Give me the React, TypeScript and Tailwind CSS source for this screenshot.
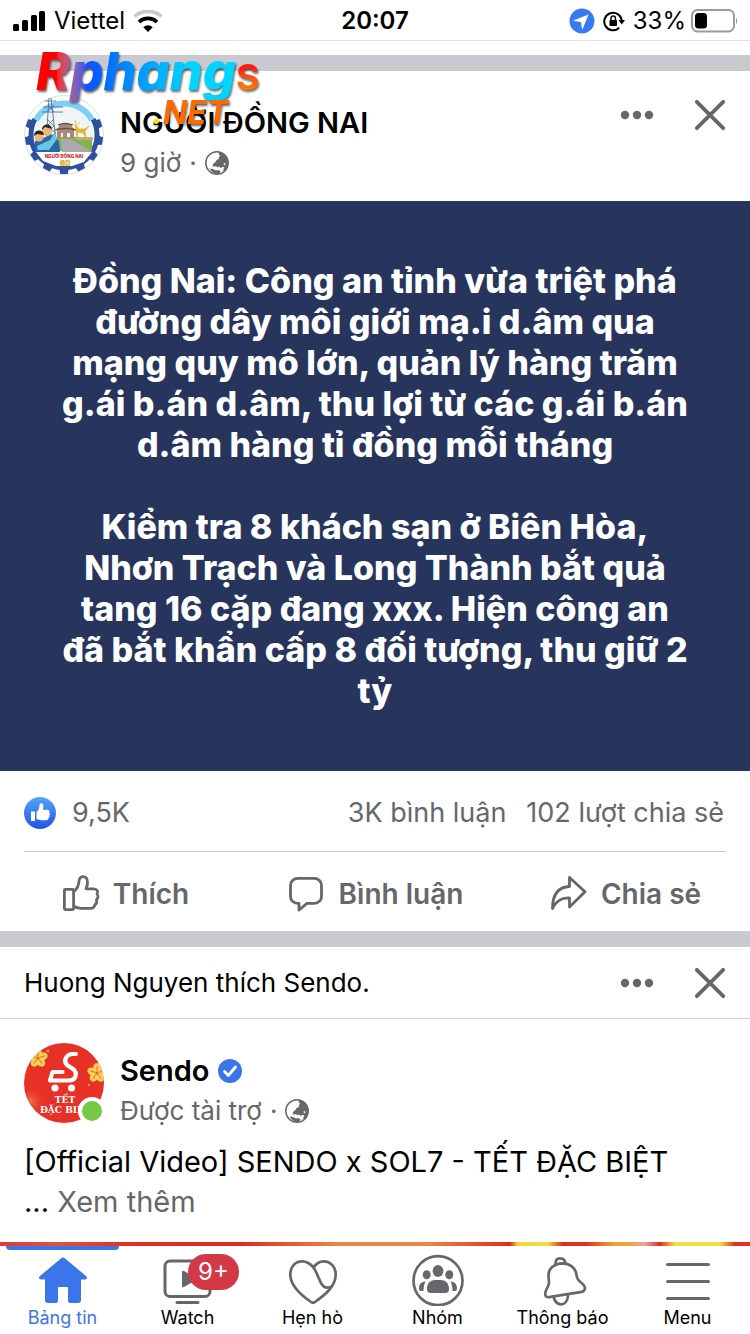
import type { ReactNode } from 'react';

function SignalIcon() {
  return (
    <svg width="34" height="22" viewBox="0 0 34 22" aria-hidden="true">
      <rect x="1" y="14" width="6" height="7" rx="1.5" />
      <rect x="10" y="10" width="6" height="11" rx="1.5" />
      <rect x="19" y="5" width="6" height="16" rx="1.5" />
      <rect x="27" y="1" width="6" height="20" rx="1.5" />
    </svg>
  );
}

function WifiIcon() {
  return (
    <svg width="30" height="22" viewBox="0 0 30 22" fill="none" aria-hidden="true">
      <path d="M1.500 6.500a20.500 20.500 0 0 1 27 0" stroke="#c9c9c9" strokeWidth="3.800" />
      <path d="M6 12a13 13 0 0 1 18 0" stroke="#000" strokeWidth="3.800" />
      <path d="M10.300 17.200a6.600 6.600 0 0 1 9.400 0L15 22Z" fill="#000" />
    </svg>
  );
}

function GlobeIcon() {
  return (
    <svg width="24" height="24" viewBox="0 0 24 24" aria-hidden="true">
      <circle cx="12" cy="12" r="11.200" fill="#fff" stroke="#65676b" strokeWidth="1.500" />
      <path
        fill="#65676b"
        d="M13 .8C19.500 1.500 24 7 23.200 12.500c-.2 3.500-1.700 6-3.700 8-.8-.6-1.500-1-1.200-2l1-2.200-1.800-.4-2 1.200-1.500-1.500-2 .8-.8-1.300-2.200.6-1.500-1.200 1.200-2.200 2-1.500 1-2 2-.6.200-2.200 1.500-1.600-1.800-.6.500-1.600ZM4.500 17.500l3.500.6 3 1.400 2.500-.6 2.200 1.600-1.500 2.300c-4 .8-7.500-1.300-9.700-5.300Z"
      />
      <path fill="#fff" d="m18.300 12.700 1.700-.7.600 1.200-1.300 1Z" />
    </svg>
  );
}

function DotsIcon() {
  return (
    <svg width="34" height="10" viewBox="0 0 34 10" fill="#65676b" aria-hidden="true">
      <circle cx="5" cy="5" r="4.200" />
      <circle cx="17" cy="5" r="4.200" />
      <circle cx="29" cy="5" r="4.200" />
    </svg>
  );
}

function CloseIcon() {
  return (
    <svg width="32" height="32" viewBox="0 0 32 32" stroke="#65676b" strokeWidth="3.800" strokeLinecap="round" aria-hidden="true">
      <path d="m2.800 2.800 26.400 26.400M29.200 2.800 2.800 29.200" />
    </svg>
  );
}

function HeaderActions() {
  return (
    <div className="flex items-center gap-10">
      <button type="button" aria-label="Tùy chọn khác" className="flex h-8 items-center">
        <DotsIcon />
      </button>
      <button type="button" aria-label="Ẩn bài viết">
        <CloseIcon />
      </button>
    </div>
  );
}

function NguoiDongNaiAvatar() {
  const teeth = Array.from({ length: 9 }, (_, i) => 72 + i * 27);
  return (
    <svg className="size-20 shrink-0" viewBox="0 0 80 80" aria-hidden="true">
      <circle cx="40" cy="40" r="39.500" fill="#fff" stroke="#dcdde0" />
      <g fill="#2f4f9f">
        {teeth.map((a) => (
          <path key={a} d="m35 8 1.200-7h7.600L45 8Z" transform={`rotate(${a} 40 40)`} />
        ))}
      </g>
      <path d="M11 24a33 33 0 1 0 58 0" fill="none" stroke="#2f4f9f" strokeWidth="5" />
      <circle cx="40" cy="40" r="30" fill="#eef5f4" />
      <path d="M14 42h54v14H14Z" fill="#83b34e" />
      <path d="M37 44h10l21 13H38Z" fill="#aaa9b0" />
      <path d="M33 43v-8h-2l4-3v-3h13v3l4 3h-2v8h-4v-5h-3v5h-4v-5h-2v5Z" fill="#a98a78" />
      <path d="M34 30q7-3 15 0M31 35q10-3 21 0" stroke="#6b4e43" strokeWidth="1.300" fill="none" />
      <path d="m51 29 4 5h6l4-3-4 5 1 7-3-5-5-1-1 6-1-9Z M52 29l-1-4m2 5 3-3" fill="#e3b934" stroke="#e3b934" strokeWidth=".800" />
      <path d="M52 42h17v3H52Z" fill="#c7a77d" />
      <path d="M12 25a32 32 0 0 1 56 0" fill="none" stroke="#7fd0f2" strokeWidth="6" />
      <path d="M25 3 22 48M27 3l5 43M19 12h20M18 17h21M21 6h11M23 24l7 7-8 7 9 7M30 24l-7 7 9 7-10 7M24 10l6 7m0-7-7 7" stroke="#4f6ea5" strokeWidth=".900" fill="none" />
      <path d="M11 57V46l8-2 8-5 8 7 1 11Z" fill="#2965a8" />
      <circle cx="15" cy="42" r="4.500" fill="#efb579" />
      <circle cx="23" cy="36" r="5" fill="#efb579" />
      <path d="M10 41a5 5 0 0 1 10-1l-7-1ZM18 35a5 5 0 0 1 10-1l-7-2Z" fill="#29241f" />
      <path d="m13 51 13-6 5-8 2 7-8 11H14Z" fill="#66c8e4" />
      <path d="M12 57h56l-8 10-12 4H32l-13-5Z" fill="#fff" />
      <text x="40" y="63" textAnchor="middle" fontFamily="Inter, sans-serif" fontSize="4.500" fontWeight="800" fill="#c91f2c">NGƯỜI ĐỒNG NAI</text>
      <text x="41" y="71" textAnchor="middle" fontFamily="Inter, sans-serif" fontSize="8" fontWeight="700" fill="#fff36b" stroke="#c29d25" strokeWidth=".500">60</text>
    </svg>
  );
}

function Blossom({ x, y }: { x: number; y: number }) {
  return (
    <g transform={`translate(${x} ${y})`} fill="#f9cf55">
      {[0, 72, 144, 216, 288].map((a) => (
        <g key={a} transform={`rotate(${a})`}>
          <ellipse cy="-5.500" rx="3.800" ry="4.500" />
          <path d="M0-2v-5" stroke="#e8672b" strokeWidth=".900" />
        </g>
      ))}
      <circle r="1.600" fill="#e8672b" />
    </g>
  );
}

function SendoAvatar() {
  return (
    <div className="relative size-20 shrink-0">
      <svg className="size-20 rounded-full" viewBox="0 0 80 80" aria-hidden="true">
        <defs>
          <radialGradient id="glow">
            <stop stopColor="#f98a4b" stopOpacity=".7" />
            <stop offset="1" stopColor="#e73127" stopOpacity="0" />
          </radialGradient>
        </defs>
        <rect width="80" height="80" fill="#e73127" />
        <circle cx="7" cy="58" r="15" fill="url(#glow)" />
        <Blossom x={14} y={15} />
        <Blossom x={73} y={30} />
        <circle cx="24" cy="8" r="1.200" fill="#f7c23f" />
        <circle cx="65" cy="42" r="1" fill="#f7c23f" />
        <path d="M52 11h-3c-7 0-10 7-6 11l6 4c5 4 3 11.500-4 11.500H26l2.500-8.500h10" fill="none" stroke="#fff" strokeWidth="4.200" strokeLinecap="round" strokeLinejoin="round" />
        <circle cx="31" cy="45" r="3.600" fill="#fff" />
        <circle cx="47.500" cy="45" r="3.600" fill="#fff" />
        <g fontFamily="'DejaVu Serif', serif" fontWeight="700" fill="#fff">
          <text x="41" y="60" fontSize="9" textAnchor="middle">TẾT</text>
          <text x="16" y="70" fontSize="9">ĐẶC BIỆT</text>
        </g>
      </svg>
      <span className="absolute -right-0.5 -bottom-0.5 size-7 rounded-full border-4 border-white bg-[#73c944]" />
    </div>
  );
}

const NAV: { label: string; icon: ReactNode; active?: boolean; badge?: string }[] = [
  {
    label: 'Bảng tin',
    active: true,
    icon: (
      <path d="M26.500 4q1.500-1.200 3 0L51 22c2 1.800.8 3.500-1 3.500h-4V46q0 3-3 3h-7.500q-2.500 0-2.500-2.500V34q0-1-1-1h-8q-1 0-1 1v12.500q0 2.500-2.500 2.500H13q-3 0-3-3V25.500H6c-1.800 0-3-1.700-1-3.500Z" fill="#3b76e8" />
    ),
  },
  {
    label: 'Watch',
    badge: '9+',
    icon: (
      <>
        <rect x="5" y="7" width="45" height="35.500" rx="5" fill="none" stroke="#65676b" strokeWidth="3" />
        <path d="M17 48.500h21" stroke="#65676b" strokeWidth="3" strokeLinecap="round" />
        <path d="M22 18q0-2 2-1l12 7q1.500 1 0 2l-12 7q-2 1-2-1Z" fill="#65676b" />
      </>
    ),
  },
  {
    label: 'Hẹn hò',
    icon: (
      <g fill="none" stroke="#65676b" strokeWidth="2.700" strokeLinejoin="round" strokeLinecap="round">
        <path d="M28.500 13.500C25 9 21 7.300 17 7.300 10 7.300 5.300 13 5.300 20.500c0 12 12 21.500 20.700 27.500q2 1.500 4 0C39 41.500 50.700 33 50.700 20.500c0-7.500-5-13.200-12-13.200-4 0-7.500 2-10.200 6.200" />
        <path d="M28.500 13.500c3.500 5 5 11 7.500 15.500 2 3.700 5 5.800 9.500 4" />
      </g>
    ),
  },
  {
    label: 'Nhóm',
    icon: (
      <g fill="#65676b">
        <circle cx="28" cy="26.700" r="24.500" fill="none" stroke="#65676b" strokeWidth="2.700" />
        <ellipse cx="28" cy="17" rx="5.400" ry="6" />
        <ellipse cx="16.700" cy="20.800" rx="4" ry="4.500" />
        <ellipse cx="39.300" cy="20.800" rx="4" ry="4.500" />
        <path d="M17 35c0-5.500 3-9 8-9h6c5 0 8 3.500 8 9 0 3-1.500 4-4 4H21c-2.500 0-4-1-4-4ZM15.500 27.500c-5 .2-6.500 3.500-6.500 7 0 2 1 2.500 2.500 2.500h2c0-4 .5-6.500 2-9.500ZM40.500 27.500c5 .2 6.500 3.500 6.500 7 0 2-1 2.500-2.500 2.500h-2c0-4-.5-6.500-2-9.500Z" />
      </g>
    ),
  },
  {
    label: 'Thông báo',
    icon: (
      <g fill="none" stroke="#65676b" strokeWidth="2.700" strokeLinejoin="round" strokeLinecap="round">
        <path d="M20.500 10.500C20 6.500 22 4.300 25 4.300c3.200 0 5.300 2 5.500 5.700" />
        <path d="M13.500 22C13 15 19 9.500 27.500 9.300 36 9.500 41 15 41.500 21c.3 3.500 1.800 5.500 4.500 7.500 3 2.300 4.500 4 3.800 6.500-.4 1.800-1.300 2.500-3 2.800L14 43.200c-2.500.3-3.800-1-3.800-3.200 0-5 3.800-7 3.800-11.500Z" />
        <path d="M18.500 43c1.500 5 4 7.400 7.500 7.400s6.500-3 7-8.400" />
      </g>
    ),
  },
  {
    label: 'Menu',
    icon: <path d="M7.500 10.500h41M7.500 27.500h41M7.500 44.500h41" stroke="#65676b" strokeWidth="3" strokeLinecap="round" />,
  },
];

export default function App() {
  return (
    <div className="flex min-h-screen flex-col bg-white font-['Inter',sans-serif] text-black">
      <header className="relative grid h-[41px] grid-cols-3 items-center border-b border-[#dedfe1] px-3 pt-0.5 text-2xl leading-8">
        <div className="flex items-center gap-2">
          <SignalIcon />
          <span>Viettel</span>
          <WifiIcon />
        </div>
        <time className="text-center font-semibold">20:07</time>
        <div className="flex items-center justify-end gap-2">
          <svg width="26" height="26" viewBox="0 0 26 26" aria-hidden="true">
            <circle cx="13" cy="13" r="12.500" fill="#367bf5" />
            <path d="M19.500 6.500 5 12.200q-1 .6.200.9l6.800.9.900 6.500q.3 1.200.9.200Z" fill="#fff" />
          </svg>
          <svg width="22" height="22" viewBox="0 0 22 22" fill="none" stroke="#000" aria-hidden="true">
            <path d="M16.200 17.800A8.800 8.800 0 1 1 18.800 10.500" strokeWidth="2" />
            <path d="M15.500 10h6.500l-3.200 4.500Z" fill="#000" stroke="none" />
            <rect x="6.500" y="10" width="7.500" height="6" rx="1" fill="#000" stroke="none" />
            <path d="M8 10V8.200a2.200 2.200 0 0 1 4.400 0V10" strokeWidth="1.500" />
          </svg>
          <span>33%</span>
          <svg className="-ml-1" width="48" height="24" viewBox="0 0 48 24" aria-hidden="true">
            <rect x="2" y="1" width="42" height="21.500" rx="5.500" fill="none" stroke="#9b9b9b" strokeWidth="2" />
            <rect x="5" y="4" width="12" height="15.500" rx="3.500" />
            <path d="M46 8.500q2.500 3.500 0 7Z" fill="#9b9b9b" />
          </svg>
        </div>
        <div className="pointer-events-none absolute top-10 left-9 z-10 italic drop-shadow-[1px_2px_1px_rgba(0,0,0,0.6)]">
          <div className="flex items-baseline text-[52px] leading-[64px] font-extrabold">
            <span className="bg-linear-to-r from-[#ff0000] from-10% via-[#144dff] via-25% to-[#00d4ff] to-75% bg-clip-text pr-1 text-transparent">Rphang</span>
            <span className="-ml-1 bg-linear-to-b from-[#ff1a10] from-30% to-[#ff7a00] to-80% bg-clip-text pr-1 text-4xl font-bold text-transparent not-italic">S</span>
          </div>
          <div className="-mt-3 pl-[116px] text-[32px] leading-[42px] font-bold text-[#ff6a00]">
            <span className="text-[#ffe600]">.</span>NET
          </div>
        </div>
      </header>

      <main className="flex-1">
        <article className="mt-3.5 border-t-[16px] border-[#c9cad0]">
          <div className="flex h-[130px] items-start px-6 pt-6">
            <NguoiDongNaiAvatar />
            <div className="ml-4 flex-1 pt-2.5">
              <h2 className="text-[29px] leading-9 font-semibold">NGƯỜI ĐỒNG NAI</h2>
              <p className="mt-1 flex items-center gap-2 text-[26px] leading-9 text-[#65676b]">
                9 giờ <span>·</span> <GlobeIcon />
              </p>
            </div>
            <div className="pt-1"><HeaderActions /></div>
          </div>

          <div className="bg-[#27355d] px-14 pt-[59px] pb-[60px] text-center text-[34px] leading-[41px] font-extrabold text-white">
            <p>
              Đồng Nai: Công an tỉnh vừa triệt phá<br />
              đường dây môi giới mạ.i d.âm qua<br />
              mạng quy mô lớn, quản lý hàng trăm<br />
              g.ái b.án d.âm, thu lợi từ các g.ái b.án<br />
              d.âm hàng tỉ đồng mỗi tháng
            </p>
            <p className="mt-[41px]">
              Kiểm tra 8 khách sạn ở Biên Hòa,<br />
              Nhơn Trạch và Long Thành bắt quả<br />
              tang 16 cặp đang xxx. Hiện công an<br />
              đã bắt khẩn cấp 8 đối tượng, thu giữ 2<br />
              tỷ
            </p>
          </div>

          <div className="mx-6 flex h-[81px] items-center border-b border-[#c9cacc] pt-1 pr-0.5 text-[27px] leading-9 text-[#65676b]">
            <svg width="32" height="32" viewBox="0 0 32 32" aria-hidden="true">
              <defs>
                <linearGradient id="like" x1="0" y1="0" x2="0" y2="1">
                  <stop stopColor="#55a5f8" />
                  <stop offset="1" stopColor="#2552e8" />
                </linearGradient>
              </defs>
              <circle cx="16" cy="16" r="16" fill="url(#like)" />
              <path fill="#fff" d="M7 14.500h4V24H7ZM12.500 15c2-1.500 2.700-3 2.900-6.500.1-1.800 1.200-2.500 2.200-2.300 2 .5 2.300 3.500 1.200 6.500h4.400c2 0 2.600 1.500 2 2.700 1 1 .8 2.200.2 2.900.3 1 .1 2-.8 2.500 0 1.700-1 2.400-2.600 2.400h-4.500c-2 0-3.500-.4-5-1.400Z" />
            </svg>
            <span className="ml-4 flex-1">9,5K</span>
            <span>3K bình luận</span>
            <span className="ml-5">102 lượt chia sẻ</span>
          </div>

          <div className="grid h-[79px] grid-cols-3 pt-1 text-[28px] leading-9 font-semibold text-[#65676b]">
            <button type="button" className="flex items-center justify-center gap-3">
              <svg width="40" height="40" viewBox="0 0 40 40" fill="none" stroke="#65676b" strokeWidth="2.800" strokeLinejoin="round" aria-hidden="true">
                <rect x="3.400" y="15.400" width="9.200" height="20.200" rx="1" />
                <path d="M12.600 18c3.400-3 5.200-6 5.400-11 .3-6 8.500-6 8.500 1.500 0 2.500-.8 4.500-1.500 6.300h7.500c4 0 5 3.200 3.500 5.200 1.500 2 1 4.500-.5 5.700.8 2.300 0 4-1.700 5.200-.3 2.500-1.800 3.500-4.300 3.500H20c-3.500 0-5.500-1-7.400-2.400" />
              </svg>
              Thích
            </button>
            <button type="button" className="flex items-center justify-center gap-3">
              <svg width="40" height="40" viewBox="0 0 40 40" fill="none" stroke="#65676b" strokeWidth="2.800" strokeLinejoin="round" aria-hidden="true">
                <path d="M10.500 4.400h17a7 7 0 0 1 7 7v11a7 7 0 0 1-7 7h-7.500L12 36v-6.600h-1.500a7 7 0 0 1-7-7v-11a7 7 0 0 1 7-7Z" />
              </svg>
              Bình luận
            </button>
            <button type="button" className="flex items-center justify-center gap-3">
              <svg width="40" height="40" viewBox="0 0 40 40" fill="none" stroke="#65676b" strokeWidth="2.800" strokeLinejoin="round" aria-hidden="true">
                <path d="M20.500 3.500 36 17.800 20.500 33v-9C12 23.500 7 27 3.500 34.500 3.500 21 9 13 20.500 12.500Z" />
              </svg>
              Chia sẻ
            </button>
          </div>
        </article>

        <article className="border-t-[16px] border-[#c9cad0]">
          <div className="flex h-[72px] items-center justify-between border-b border-[#d0d1d4] px-6 text-[26px] leading-9">
            <p>Huong Nguyen thích Sendo.</p>
            <HeaderActions />
          </div>
          <div className="flex px-6 pt-6">
            <SendoAvatar />
            <div className="ml-4">
              <h2 className="mt-2.5 flex items-center gap-2 text-[29px] leading-9 font-semibold">
                Sendo
                <svg width="24" height="24" viewBox="0 0 24 24" aria-label="Đã xác minh">
                  <circle cx="12" cy="12" r="12" fill="#3b76e8" />
                  <path d="m6.500 12.500 3.800 4 7.200-8.500" fill="none" stroke="#fff" strokeWidth="2.800" strokeLinecap="round" strokeLinejoin="round" />
                </svg>
              </h2>
              <p className="mt-1 flex items-center gap-2 text-[26px] leading-9 text-[#65676b]">
                Được tài trợ <span>·</span> <GlobeIcon />
              </p>
            </div>
          </div>
          <p className="px-6 pt-[13px] pb-5 text-[29px] leading-10">
            [Official Video] SENDO x SOL7 - TẾT ĐẶC BIỆT<br />
            ... <button type="button" className="text-[#65676b]">Xem thêm</button>
          </p>
          <div className="h-1 bg-[linear-gradient(to_right,#dc3a3a_0%,#e2503f_8%,#e0301f_17%,#dd2c20_32%,#ec8545_45%,#ec8545_57%,#e63b26_66%,#e02a18_68%,#f0d63a_69%,#f2dc40_73%,#e0301f_75%,#e0301f_78%,#f0a23a_82%,#f0a23a_84%,#e8a0a8_86%,#dd2c20_88%,#f0e040_90%,#f0e040_96%,#e0301f_98%)]" />
        </article>
      </main>

      <nav className="grid h-22 grid-cols-6 bg-white">
        {NAV.map(({ label, icon, active, badge }) => (
          <a key={label} href="#" aria-current={active ? 'page' : undefined} className={`relative flex flex-col items-center pt-2 text-lg leading-6 ${active ? 'text-[#3b76e8]' : ''}`}>
            {active && <span className="absolute inset-x-1.5 top-0 h-1 rounded-b bg-[#3b76e8]" />}
            <svg width="56" height="52" viewBox="0 0 56 52" aria-hidden="true">{icon}</svg>
            {badge && <span className="absolute top-2 left-[63px] flex h-9 items-center rounded-full bg-[#d23845] px-2.5 text-2xl text-white">{badge}</span>}
            {label}
          </a>
        ))}
      </nav>
    </div>
  );
}
